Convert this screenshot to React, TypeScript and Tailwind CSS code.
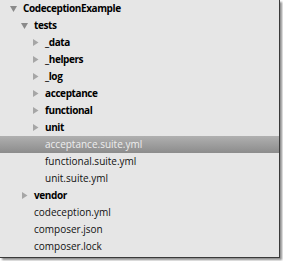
import React from "react";

type Node = {
  name: string;
  depth: number;
  folder?: boolean;
  open?: boolean;
  selected?: boolean;
};

const rows: Node[] = [
  { name: "CodeceptionExample", depth: 0, folder: true, open: true },
  { name: "tests", depth: 1, folder: true, open: true },
  { name: "_data", depth: 2, folder: true },
  { name: "_helpers", depth: 2, folder: true },
  { name: "_log", depth: 2, folder: true },
  { name: "acceptance", depth: 2, folder: true },
  { name: "functional", depth: 2, folder: true },
  { name: "unit", depth: 2, folder: true },
  { name: "acceptance.suite.yml", depth: 2, selected: true },
  { name: "functional.suite.yml", depth: 2 },
  { name: "unit.suite.yml", depth: 2 },
  { name: "vendor", depth: 1, folder: true },
  { name: "codeception.yml", depth: 1 },
  { name: "composer.json", depth: 1 },
  { name: "composer.lock", depth: 1 },
];

function Arrow({ open }: { open?: boolean }) {
  return open ? (
    <svg width="7" height="7" viewBox="0 0 7 7" className="shrink-0">
      <path d="M0 1 L7 1 L3.5 7 Z" fill="#8a8a8a" />
    </svg>
  ) : (
    <svg width="7" height="7" viewBox="0 0 7 7" className="shrink-0">
      <path d="M1 0 L6.5 3.5 L1 7 Z" fill="#a6a6a6" />
    </svg>
  );
}

export default function App() {
  return (
    <div className="w-[283px] h-[261px] bg-white">
      <div className="relative w-[280px] h-[258px] bg-[#e6e6e6] border-r border-b border-[#3a3a3a] shadow-[2px_2px_2px_rgba(0,0,0,0.45)] font-['Open_Sans',sans-serif] text-[10px]">
        {rows.map((r) => (
          <div
            key={r.name}
            className={
              r.selected
                ? "flex items-center h-[17px] bg-gradient-to-b from-[#b0b0b0] to-[#8c8c8c] text-[#eeeeee]"
                : "flex items-center h-[17px] text-[#111]"
            }
            style={{ paddingLeft: 10 + r.depth * 11 }}
          >
            <span className="w-[13px] flex items-center">
              {r.folder && <Arrow open={r.open} />}
            </span>
            <span
              className={
                r.folder ? "font-bold tracking-[-0.4px] text-black" : ""
              }
            >
              {r.name}
            </span>
          </div>
        ))}
      </div>
    </div>
  );
}
